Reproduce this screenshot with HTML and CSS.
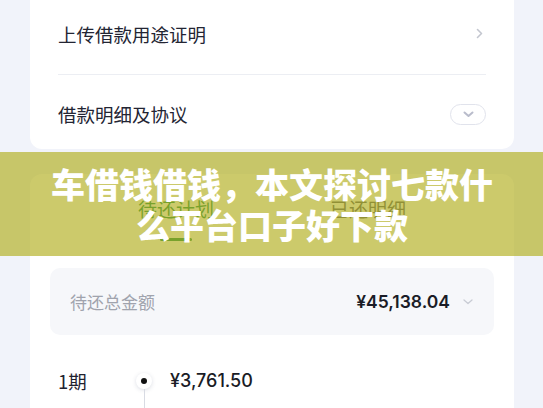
FILE: index.html
```html
<!DOCTYPE html>
<html lang="zh">
<head>
<meta charset="utf-8">
<link rel="stylesheet" href="styles.css">
</head>
<body>
<div class="page">
  <div class="card card-top">
    <div class="row row-first">
      <span class="row-title">上传借款用途证明</span>
      <svg class="chev-right" width="7" height="11" viewBox="0 0 7 11"><path d="M1.5 1.5 L5.5 5.5 L1.5 9.5" fill="none" stroke="#c3c6cf" stroke-width="1.6" stroke-linecap="round" stroke-linejoin="round"/></svg>
    </div>
    <div class="divider"></div>
    <div class="row row-second">
      <span class="row-title">借款明细及协议</span>
      <span class="pill"><svg width="11" height="7" viewBox="0 0 11 7"><path d="M1.5 1.5 L5.5 5 L9.5 1.5" fill="none" stroke="#b9bccb" stroke-width="2" stroke-linecap="round" stroke-linejoin="round"/></svg></span>
    </div>
  </div>

  <div class="card card-plan">
    <div class="tabs">
      <div class="tab tab-active">待还计划<span class="tab-bar"></span></div>
      <div class="tab">已还明细</div>
    </div>
    <div class="total">
      <span class="total-label">待还总金额</span>
      <span class="total-right">
        <span class="total-amount">¥45,138.04</span>
        <svg width="10" height="6" viewBox="0 0 10 6"><path d="M1 1 L5 4.5 L9 1" fill="none" stroke="#c9ccd4" stroke-width="1.3" stroke-linecap="round" stroke-linejoin="round"/></svg>
      </span>
    </div>
    <div class="term">
      <div class="term-left">
        <div class="term-name">1期</div>
        <div class="term-date">04/08/23</div>
      </div>
      <div class="term-axis">
        <span class="dot"><span class="dot-inner"></span></span>
        <span class="axis-line"></span>
      </div>
      <div class="term-right">
        <div class="term-amount">¥3,761.50</div>
        <div class="term-detail"><span>本金 ¥3,562.10</span><span>利息 ¥199.40</span></div>
      </div>
    </div>
  </div>

  <div class="banner">
    <div class="banner-text">车借钱借钱，本文探讨七款什么平台口子好下款</div>
  </div>
</div>
</body>
</html>
```

FILE: styles.css
```css
* { box-sizing: border-box; }
html, body { margin: 0; padding: 0; }
body {
  background: #f1f3fa;
  font-family: "Noto Sans CJK SC", "Noto Sans", sans-serif;
  color: #1f2230;
  width: 543px;
  height: 408px;
  overflow: hidden;
}
.page {
  position: relative;
  padding: 0 29px 0 30px;
  height: 408px;
  overflow: hidden;
}
.card {
  background: #ffffff;
  border-radius: 12px;
}
.card-top {
  margin-top: -7px;
  border-radius: 0 0 12px 12px;
  padding: 0 28px;
}
.row {
  display: flex;
  align-items: center;
  justify-content: space-between;
}
.row-first { height: 81px; }
.row-second { height: 74px; padding-top: 4px; }
.row-title {
  font-size: 18.5px;
  line-height: 24px;
  color: #232533;
}
.chev-right { margin-right: 3px; }
.divider { height: 1px; background: #eceef3; }
.pill {
  width: 36px;
  height: 21px;
  border: 1px solid #e1e3ec;
  border-radius: 11px;
  display: flex;
  align-items: center;
  justify-content: center;
}
.card-plan {
  margin-top: 25px;
  padding: 0 20px 20px;
}
.tabs {
  display: flex;
  justify-content: center;
  gap: 116px;
  padding-top: 24px;
}
.tab {
  position: relative;
  font-size: 19px;
  line-height: 22px;
  color: #5f636e;
  height: 43px;
}
.tab-active { color: #1b8f55; }
.tab-bar {
  position: absolute;
  left: 50%;
  margin-left: -16px;
  top: 40px;
  width: 32px;
  height: 3px;
  border-radius: 2px;
  background: #1b8f55;
}
.total {
  margin-top: 27px;
  height: 67px;
  background: #f6f7fa;
  border-radius: 10px;
  display: flex;
  align-items: center;
  justify-content: space-between;
  padding: 0 21px 0 20px;
}
.total-label {
  font-size: 17px;
  color: #a0a3ad;
}
.total-right {
  display: flex;
  align-items: center;
  gap: 13px;
}
.total-amount {
  font-family: "Inter", "Noto Sans", sans-serif;
  font-size: 17.5px;
  font-weight: 600;
  color: #1a1c26;
}
.term {
  display: flex;
  margin-top: 29px;
  padding-left: 8px;
}
.term-left { width: 75px; }
.term-name {
  font-size: 18.5px;
  line-height: 34px;
  color: #1f2230;
}
.term-date, .term-detail {
  font-size: 14px;
  color: #a4a7b0;
  margin-top: 14px;
}
.term-axis {
  width: 22px;
  display: flex;
  flex-direction: column;
  align-items: center;
  padding-top: 9px;
}
.dot {
  width: 16px;
  height: 16px;
  border-radius: 50%;
  background: #fff;
  box-shadow: 0 1px 4px rgba(60, 70, 110, 0.18);
  display: flex;
  align-items: center;
  justify-content: center;
}
.dot-inner {
  width: 6px;
  height: 6px;
  border-radius: 50%;
  background: #111;
}
.axis-line {
  width: 1px;
  height: 40px;
  background: #d8dbe3;
}
.term-right { padding-left: 15px; }
.term-amount {
  font-family: "Inter", "Noto Sans", sans-serif;
  font-size: 18px;
  font-weight: 500;
  line-height: 34px;
  color: #1a1c26;
}
.term-detail { display: flex; gap: 40px; }
.banner {
  position: absolute;
  left: 0;
  right: 0;
  top: 152px;
  height: 104px;
  background: rgba(174, 171, 20, 0.63);
  display: flex;
  align-items: center;
  justify-content: center;
}
.banner-text {
  width: 450px;
  text-align: center;
  color: #ffffff;
  font-size: 34px;
  font-weight: 900;
  line-height: 41px;
  margin-left: 1px;
}
```
